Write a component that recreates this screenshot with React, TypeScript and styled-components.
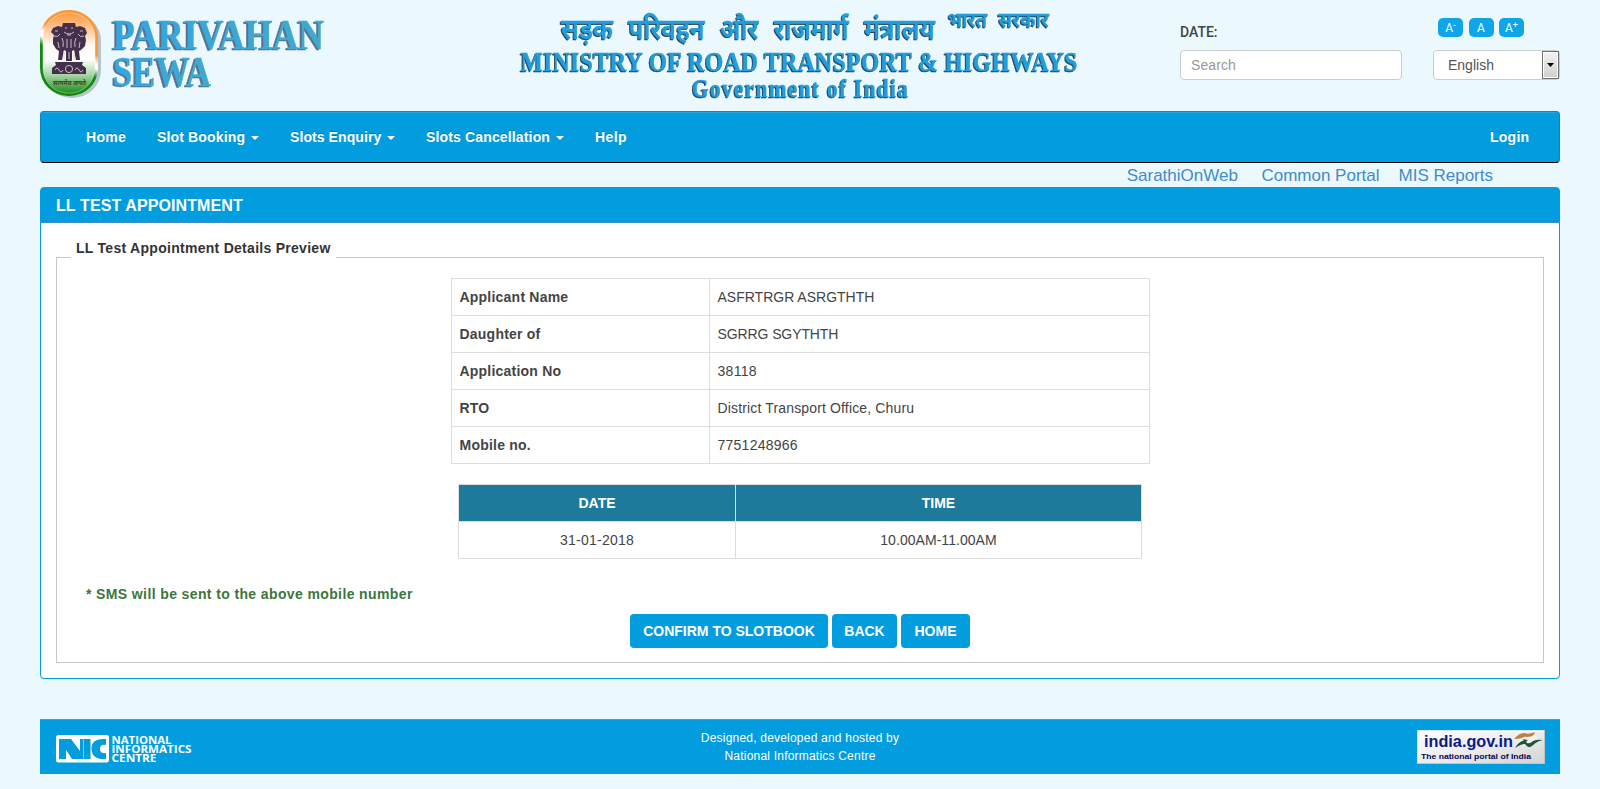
import React from "react";
import styled, { createGlobalStyle } from "styled-components";

const Global = createGlobalStyle`
  * { box-sizing: border-box; }
  body {
    margin: 0;
    background: #ebf9ff;
    color: #444;
    font: 14px/20px "Liberation Sans", Arial, sans-serif;
  }
`;

const Page = styled.div`
  display: flex;
  flex-direction: column;
  height: 789px;
  padding: 0 40px;
`;

const Header = styled.header`
  display: flex;
  height: 111px;
`;
const Brand = styled.div`
  width: 470px;
`;
const Ministry = styled.div`
  width: 670px;
`;
const SearchBlock = styled.div`
  width: 253px;
  padding-top: 22px;
`;
const DateLabel = styled.div`
  height: 28px;
  font-family: Roboto, sans-serif;
  font-weight: 500;
  font-size: 14px;
`;
const SearchInput = styled.input`
  display: block;
  width: 222px;
  height: 30px;
  padding: 0 10px;
  border: 1px solid #ccc;
  border-radius: 4px;
  background: #fff;
  font: 14px "Liberation Sans", Arial, sans-serif;
  letter-spacing: 0.1px;
  outline: none;
  &::placeholder { color: #999; opacity: 1; }
`;
const Tools = styled.div`
  width: 127px;
  padding-top: 18px;
`;
const SizeRow = styled.div`
  display: flex;
  gap: 5.5px;
  height: 32px;
  padding-left: 5px;
`;
const SizeButton = styled.button`
  width: 25px;
  height: 19px;
  padding: 0;
  border: 0;
  border-radius: 5px;
  background: #0fa6e9;
  color: #fff;
  font: 12px/20px Roboto, sans-serif;
  sup { font-size: 9px; line-height: 0; vertical-align: 4px; }
`;
const Language = styled.div`
  display: flex;
  justify-content: space-between;
  align-items: center;
  height: 30px;
  padding-left: 14px;
  border: 1px solid #ccc;
  border-radius: 4px;
  background: #fff;
  color: #555;
`;
const Arrow = styled.span`
  display: flex;
  align-items: center;
  justify-content: center;
  width: 17px;
  height: 28px;
  border: 1px solid #707070;
  box-shadow: inset 0 0 0 1px #fff;
  background: linear-gradient(#f2f2f2, #cfcfcf);
`;

const Nav = styled.nav`
  display: flex;
  align-items: center;
  height: 52px;
  flex: none;
  padding: 0 30px 0 45px;
  border: 1px solid #1483bb;
  border-bottom-color: #000;
  border-radius: 4px;
  background: #029ddf;
  box-shadow: inset 0 1px 0 #22a9e3;
`;
const NavItem = styled.a<{ $width: number; $spacing?: number }>`
  display: flex;
  align-items: center;
  gap: 6px;
  width: ${(p) => p.$width}px;
  color: #fff;
  font-weight: bold;
  letter-spacing: ${(p) => p.$spacing ?? 0.15}px;
  text-shadow: 0 -1px 0 rgba(0, 0, 0, 0.25);
  white-space: nowrap;
`;
const Caret = styled.i`
  margin-top: 2px;
  border: 4px solid transparent;
  border-top-color: #fff;
  border-bottom: 0;
`;
const Spacer = styled.div`
  flex: 1;
`;

const Links = styled.div`
  display: flex;
  justify-content: flex-end;
  height: 24px;
  flex: none;
  padding-right: 67px;
  line-height: 26px;
`;
const PortalLink = styled.a<{ $gap?: number }>`
  margin-left: ${(p) => p.$gap ?? 0}px;
  color: #428bca;
  font-size: 17px;
`;

const Panel = styled.main`
  height: 492px;
  flex: none;
  border: 1px solid #029ddf;
  border-radius: 4px;
  background: #fff;
  box-shadow: 0 1px 1px rgba(0, 0, 0, 0.05);
`;
const PanelTitle = styled.h1`
  height: 35px;
  margin: 0;
  padding: 0 15px;
  border-bottom: 1px solid #428bca;
  background: #029ddf;
  color: #fff;
  font-size: 16px;
  line-height: 36px;
  letter-spacing: 0.1px;
`;
const Fieldset = styled.fieldset`
  height: 425px;
  margin: 15px 15px 0;
  padding: 0;
  border: 1px solid #c8c8c8;
`;
const Legend = styled.legend`
  height: 38px;
  margin-left: 14px;
  padding: 0 5px;
  color: #333;
  font-weight: bold;
  letter-spacing: 0.28px;
`;
const Table = styled.table<{ $width: number; $top: number }>`
  width: ${(p) => p.$width}px;
  margin: ${(p) => p.$top}px auto 0;
  border-collapse: collapse;
  table-layout: fixed;
`;
const Cell = styled.td<{ $center?: boolean; $bold?: boolean; $spacing?: number }>`
  height: 37px;
  padding: 0 8px;
  border: 1px solid #ddd;
  font-weight: ${(p) => (p.$bold ? "bold" : "normal")};
  letter-spacing: ${(p) => p.$spacing ?? 0}px;
  text-align: ${(p) => (p.$center ? "center" : "left")};
`;
const HeadCell = styled.th`
  height: 37px;
  padding: 0 8px;
  border: 1px solid #ddd;
  background: #1e7a9a;
  color: #fff;
`;
const Note = styled.p`
  margin: 25px 0 10px 29px;
  color: #3c763d;
  font-weight: bold;
  letter-spacing: 0.38px;
`;
const Actions = styled.div`
  display: flex;
  justify-content: center;
  gap: 4px;
`;
const Action = styled.button<{ $width: number }>`
  width: ${(p) => p.$width}px;
  height: 34px;
  padding: 0;
  border: 0;
  border-radius: 4px;
  background: #029ddf;
  color: #fff;
  font: bold 14px "Liberation Sans", Arial, sans-serif;
  white-space: nowrap;
`;

const Footer = styled.footer`
  display: flex;
  justify-content: space-between;
  height: 55px;
  flex: none;
  margin-top: 40px;
  padding: 0 15px;
  border-top: 1px solid #22a9e3;
  background: #029ddf;
`;
const FooterSide = styled.div<{ $right?: boolean }>`
  display: flex;
  width: 300px;
  justify-content: ${(p) => (p.$right ? "flex-end" : "flex-start")};
`;
const Credit = styled.div`
  padding-top: 9px;
  color: #fff;
  font-size: 12px;
  line-height: 18px;
  letter-spacing: 0.21px;
  text-align: center;
`;

const Extruded = styled.g<{ $x: number; $shade: string }>`
  filter: drop-shadow(${(p) => p.$x}px 1.2px 0.5px ${(p) => p.$shade});
`;

type LetteringProps = {
  x: number;
  y: number;
  w: number;
  size: number;
  squeeze?: number;
  wordSpacing?: number;
  weight?: number;
  fill?: string;
  family?: string;
  children: string;
};

/* Narrowed letters, tracked out to fill the given width. */
const Lettering = ({ x, y, w, size, squeeze = 1, wordSpacing = 0, weight = 700, fill = "#229ede", family = "Liberation Serif", children }: LetteringProps) => (
  <text
    transform={`translate(${x} ${y}) scale(${squeeze} 1)`}
    fontFamily={`"${family}", serif`}
    fontWeight={weight}
    fontSize={size}
    wordSpacing={wordSpacing}
    textLength={w / squeeze}
    lengthAdjust={squeeze === 1 ? "spacingAndGlyphs" : "spacing"}
    fill={fill}
    stroke={fill}
    strokeWidth="0.4"
  >
    {children}
  </text>
);

const BrandLogo = () => (
  <svg width="300" height="104" viewBox="0 0 300 104">
    <defs>
      <linearGradient id="ring" gradientUnits="userSpaceOnUse" x1="54.8" y1="7" x2="3.2" y2="93">
        <stop offset="0.4" stopColor="#fb9735" /><stop offset="0.48" stopColor="#fff" />
        <stop offset="0.52" stopColor="#fff" /><stop offset="0.6" stopColor="#128a10" />
      </linearGradient>
      <linearGradient id="field" x1="0" y1="0" x2="0" y2="1">
        <stop offset="0" stopColor="#fb9c44" /><stop offset="0.16" stopColor="#fdbc85" /><stop offset="0.4" stopColor="#fff8f2" />
        <stop offset="0.58" stopColor="#fff" /><stop offset="0.78" stopColor="#a4d4a2" /><stop offset="1" stopColor="#1d8c1b" />
      </linearGradient>
      <linearGradient id="word" x1="0" y1="0" x2="1" y2="0">
        <stop offset="0" stopColor="#35a6e2" /><stop offset="1" stopColor="#42a9cc" />
      </linearGradient>
    </defs>
    <rect x="3" y="13" width="58" height="85" rx="28" fill="#8a999d" opacity="0.55" />
    <rect x="0" y="10" width="58" height="86" rx="28" fill="url(#ring)" />
    <rect x="3" y="13" width="52" height="80" rx="25" fill="url(#field)" stroke="#fff" strokeOpacity="0.35" />
    <g fill="#44304c">
      <path d="M23 23h12l1 4 4-1 5 2 2 5-2 3 1 4-1 6-4 4-2 1 1 9h-4l-2-10-2 1v10h-6V51l-2-1-2 10h-4l1-9-3-2-3-5v-5l1-4-3-3 2-4 5-2 4 1z" />
      <path d="M15 62h28l-1 3 4 3v6H12v-6l4-3z" />
    </g>
    <g fill="none" stroke="#d9c9d0" strokeWidth="0.9">
      <circle cx="29" cy="69" r="3.6" />
      <path d="M15 70q2-4 4 0t4 0M35 70q2-4 4 0t4 0M25 28h2M31 28h2M24 32q5 4 10 0M27 35h4M15 31h3M40 31h3M14 36q4 2 6-2M38 34q2 4 6 2M22 38q2 4 1 9M36 38q-2 4-1 9M27 39v9M31 39v9M18 42l1 6M40 42l-1 6M24 51v9M34 51v9M29 52v7" />
    </g>
    <text x="13" y="84.5" fontFamily='"Noto Sans", sans-serif' fontSize="7" fontWeight="bold" textLength="33" lengthAdjust="spacingAndGlyphs" fill="#32452f">सत्यमेव जयते</text>
    <Extruded $x={-1.2} $shade="#5b7088">
      <Lettering x={73} y={48.5} w={211} size={41.5} fill="url(#word)">PARIVAHAN</Lettering>
      <Lettering x={73} y={86} w={98} size={41.5} fill="url(#word)">SEWA</Lettering>
    </Extruded>
  </svg>
);

const MinistryTitle = () => (
  <svg width="600" height="108" viewBox="510 0 600 108">
    <Extruded $x={-1} $shade="#2d3f4c">
      <Lettering x={561} y={38.5} w={374} size={28} wordSpacing={10} weight={600} family="Noto Sans">सड़क परिवहन और राजमार्ग मंत्रालय</Lettering>
      <Lettering x={948} y={26.5} w={101} size={20.5} wordSpacing={7} weight={600} family="Noto Sans">भारत सरकार</Lettering>
      <Lettering x={520.5} y={71} w={557} size={27.5} squeeze={0.86}>MINISTRY OF ROAD TRANSPORT &amp; HIGHWAYS</Lettering>
      <Lettering x={692} y={96.5} w={216} size={25.5} squeeze={0.84}>Government of India</Lettering>
    </Extruded>
  </svg>
);

const NicLogo = () => (
  <svg width="140" height="54" viewBox="55 720 140 54">
    <rect x="56" y="735" width="53" height="27.5" rx="2.5" fill="#fff" />
    <path fill="#029ddf" d="M59 739h12l9 12v-12h3v20H72l-6-9v9h-7zM83.5 739h7v20h-7zM106 739v6q-6-1-6 4t6 4v6q-14 1-14.500-10t14.500-10z" />
    <g fill="#fff" fontFamily="Open Sans, sans-serif" fontWeight="bold" fontSize="11.3">
      <text x="111.500" y="744" textLength="60" lengthAdjust="spacingAndGlyphs">NATIONAL</text>
      <text x="111.500" y="753" textLength="80" lengthAdjust="spacingAndGlyphs">INFORMATICS</text>
      <text x="111.500" y="762" textLength="45" lengthAdjust="spacingAndGlyphs">CENTRE</text>
    </g>
  </svg>
);

const IndiaLogo = () => (
  <svg width="128" height="54" viewBox="1417 720 128 54">
    <defs>
      <linearGradient id="plate" x1="0" y1="0" x2="1" y2="1">
        <stop offset="0" stopColor="#fff" /><stop offset="0.5" stopColor="#ededed" /><stop offset="1" stopColor="#d2d2d2" />
      </linearGradient>
    </defs>
    <rect x="1417.5" y="730.5" width="127" height="33" fill="url(#plate)" stroke="#c3c3c3" />
    <path d="M1418 763v-32h126" fill="none" stroke="#fff" />
    <path d="M1514 739q5-6 10-6 5 2 11-1-1 4-6 5-5-1-7 1-4 1-8 1z" fill="#c07e42" />
    <path d="M1517 743l6-5q5-2 9-1l4-3 1 4-6 5-8 3z" fill="#f6f3ef" />
    <path d="M1523 739l5 1-3 3z" fill="#4a4b9a" />
    <path d="M1515 748q4-7 10-8l2 3q3 1 6-2 5-2 10-1-6 1-11 6-4 3-7-2-4 0-10 4z" fill="#1b5637" />
    <g fontFamily="Liberation Sans, sans-serif" fontWeight="bold">
      <text x="1424" y="747" fontSize="16.500" textLength="89" lengthAdjust="spacingAndGlyphs" fill="#0a1a8c">india.gov.in</text>
      <text x="1421" y="759" fontSize="8" textLength="110" lengthAdjust="spacingAndGlyphs" fill="#06065c">The national portal of India</text>
    </g>
  </svg>
);

const details = [
  { label: "Applicant Name", value: "ASFRTRGR ASRGTHTH", spacing: 0 },
  { label: "Daughter of", value: "SGRRG SGYTHTH", spacing: -0.1 },
  { label: "Application No", value: "38118", spacing: 0.3 },
  { label: "RTO", value: "District Transport Office, Churu", spacing: 0.15 },
  { label: "Mobile no.", value: "7751248966", spacing: 0.25 },
];

export default function App() {
  return (
    <Page>
      <Global />
      <Header>
        <Brand><BrandLogo /></Brand>
        <Ministry><MinistryTitle /></Ministry>
        <SearchBlock>
          <DateLabel>DATE:</DateLabel>
          <SearchInput placeholder="Search" />
        </SearchBlock>
        <Tools>
          <SizeRow>
            <SizeButton>A<sup>-</sup></SizeButton>
            <SizeButton>A</SizeButton>
            <SizeButton>A<sup>+</sup></SizeButton>
          </SizeRow>
          <Language>English<Arrow><svg width="7" height="4"><path d="M0 0h7L3.5 4z" /></svg></Arrow></Language>
        </Tools>
      </Header>
      <Nav>
        <NavItem $width={71} $spacing={0.3}>Home</NavItem>
        <NavItem $width={133}>Slot Booking<Caret /></NavItem>
        <NavItem $width={136} $spacing={0.08}>Slots Enquiry<Caret /></NavItem>
        <NavItem $width={169}>Slots Cancellation<Caret /></NavItem>
        <NavItem $width={40} $spacing={0.4}>Help</NavItem>
        <Spacer />
        <NavItem $width={39} $spacing={0.25}>Login</NavItem>
      </Nav>
      <Links>
        <PortalLink>SarathiOnWeb</PortalLink>
        <PortalLink $gap={23.5}>Common Portal</PortalLink>
        <PortalLink $gap={19}>MIS Reports</PortalLink>
      </Links>
      <Panel>
        <PanelTitle>LL TEST APPOINTMENT</PanelTitle>
        <Fieldset>
          <Legend>LL Test Appointment Details Preview</Legend>
          <Table $width={699} $top={2}>
            <colgroup><col width="258" /><col /></colgroup>
            <tbody>
              {details.map(({ label, value, spacing }) => (
                <tr key={label}><Cell $bold $spacing={0.22}>{label}</Cell><Cell $spacing={spacing}>{value}</Cell></tr>
              ))}
            </tbody>
          </Table>
          <Table $width={684} $top={20}>
            <colgroup><col width="277" /><col /></colgroup>
            <thead><tr><HeadCell>DATE</HeadCell><HeadCell>TIME</HeadCell></tr></thead>
            <tbody><tr><Cell $center $spacing={0.25}>31-01-2018</Cell><Cell $center $spacing={0.05}>10.00AM-11.00AM</Cell></tr></tbody>
          </Table>
          <Note>* SMS will be sent to the above mobile number</Note>
          <Actions>
            <Action $width={198}>CONFIRM TO SLOTBOOK</Action>
            <Action $width={65}>BACK</Action>
            <Action $width={69}>HOME</Action>
          </Actions>
        </Fieldset>
      </Panel>
      <Footer>
        <FooterSide><NicLogo /></FooterSide>
        <Credit>Designed, developed and hosted by<br />National Informatics Centre</Credit>
        <FooterSide $right><IndiaLogo /></FooterSide>
      </Footer>
    </Page>
  );
}
